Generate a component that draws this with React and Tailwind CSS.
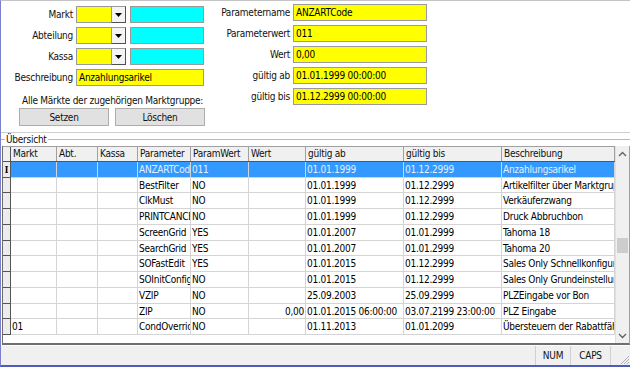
import React from "react";

const font = { fontFamily: "Tahoma, 'DejaVu Sans Condensed', 'Liberation Sans', sans-serif" };

const cols = [
  { key: "markt", label: "Markt", w: "w-[46px]" },
  { key: "abt", label: "Abt.", w: "w-[41px]" },
  { key: "kassa", label: "Kassa", w: "w-[40px]" },
  { key: "param", label: "Parameter", w: "w-[53px]" },
  { key: "pw", label: "ParamWert", w: "w-[58px]" },
  { key: "wert", label: "Wert", w: "w-[57px]", right: true },
  { key: "ab", label: "gültig ab", w: "w-[98px]" },
  { key: "bis", label: "gültig bis", w: "w-[98px]" },
  { key: "beschr", label: "Beschreibung", w: "w-[113px]" },
];

const rows = [
  { h: "h-[16px]", sel: true, param: "ANZARTCode", pw: "011", ab: "01.01.1999", bis: "01.12.2999", beschr: "Anzahlungsarikel" },
  { h: "h-[15px]", param: "BestFilter", pw: "NO", ab: "01.01.1999", bis: "01.12.2999", beschr: "Artikelfilter über Marktgruppe" },
  { h: "h-[16px]", param: "ClkMust", pw: "NO", ab: "01.01.1999", bis: "01.12.2999", beschr: "Verkäuferzwang" },
  { h: "h-[16px]", param: "PRINTCANCEL", pw: "NO", ab: "01.01.1999", bis: "01.12.2999", beschr: "Druck Abbruchbon" },
  { h: "h-[16px]", param: "ScreenGrid", pw: "YES", ab: "01.01.2007", bis: "01.01.2999", beschr: "Tahoma 18" },
  { h: "h-[15px]", param: "SearchGrid", pw: "YES", ab: "01.01.2007", bis: "01.01.2999", beschr: "Tahoma 20" },
  { h: "h-[16px]", param: "SOFastEdit", pw: "YES", ab: "01.01.2015", bis: "01.12.2999", beschr: "Sales Only Schnellkonfiguration" },
  { h: "h-[16px]", param: "SOInitConfig", pw: "NO", ab: "01.01.2015", bis: "01.12.2999", beschr: "Sales Only Grundeinstellung" },
  { h: "h-[16px]", param: "VZIP", pw: "NO", ab: "25.09.2003", bis: "25.09.2999", beschr: "PLZEingabe vor Bon" },
  { h: "h-[15px]", param: "ZIP", pw: "NO", wert: "0,00", ab: "01.01.2015 06:00:00", bis: "03.07.2199 23:00:00", beschr: "PLZ Eingabe" },
  { h: "h-[16px]", markt: "01", param: "CondOverride", pw: "NO", ab: "01.11.2013", bis: "01.01.2099", beschr: "Übersteuern der Rabattfähigkeit" },
];

function Field({ w, color = "bg-[#ffff00]", value = "" }) {
  return (
    <div className={`${w} ${color} h-[17px] border border-[#9a9a9a] pl-[2px] leading-[15px] whitespace-nowrap overflow-hidden text-black`}>
      {value}
    </div>
  );
}

function Combo() {
  return (
    <div className="flex h-[17px]">
      <div className="w-[35px] h-full bg-[#ffff00] border border-r-0 border-[#9a9a9a]" />
      <div className="w-[15px] h-full bg-[#f4f4f4] border border-[#9a9a9a] border-r-[#505050] border-b-[#505050] flex items-center justify-center">
        <svg width="7" height="4" viewBox="0 0 7 4">
          <path d="M0 0h7L3.5 4z" fill="#000" />
        </svg>
      </div>
    </div>
  );
}

function LeftRow({ label, children }) {
  return (
    <div className="flex items-center h-[17px]">
      <div className="w-[73px] text-right pr-[1px] text-[#111]">{label}</div>
      <div className="ml-[2px] flex items-center">{children}</div>
    </div>
  );
}

function RightRow({ label, value }) {
  return (
    <div className="flex items-center h-[17px]">
      <div className="w-[84px] text-right text-[#111]">{label}</div>
      <div className="ml-[3px]">
        <Field w="w-[134px]" value={value} />
      </div>
    </div>
  );
}

function Button({ children }) {
  return (
    <div className="w-[90px] h-[18px] bg-[#e1e1e1] border border-[#adadad] flex items-center justify-center text-[#111]">
      {children}
    </div>
  );
}

export default function App() {
  return (
    <div
      style={font}
      className="w-[630px] h-[367px] bg-white border-t border-t-[#c4c4c4] border-l border-l-[#7b7fd0] border-b-2 border-b-[#4e5bb8] flex flex-col text-[10px] tracking-[-0.25px] overflow-hidden"
    >
      {/* Eingabemaske */}
      <div className="h-[131px] flex shrink-0">
        <div className="w-[205px] pt-[5px] flex flex-col">
          <div className="flex flex-col gap-[4px]">
            <LeftRow label="Markt">
              <Combo />
              <div className="ml-[4px]"><Field w="w-[74px]" color="bg-[#00ffff]" /></div>
            </LeftRow>
            <LeftRow label="Abteilung">
              <Combo />
              <div className="ml-[4px]"><Field w="w-[74px]" color="bg-[#00ffff]" /></div>
            </LeftRow>
            <LeftRow label="Kassa">
              <Combo />
              <div className="ml-[4px]"><Field w="w-[74px]" color="bg-[#00ffff]" /></div>
            </LeftRow>
            <LeftRow label="Beschreibung">
              <Field w="w-[128px]" value="Anzahlungsarikel" />
            </LeftRow>
          </div>
          <div className="mt-[9px] pl-[21px] h-[12px] leading-[12px] whitespace-nowrap text-[#111]">
            Alle Märkte der zugehörigen Marktgruppe:
          </div>
          <div className="mt-[1px] pl-[18px] flex gap-[6px]">
            <Button>Setzen</Button>
            <Button>Löschen</Button>
          </div>
        </div>
        <div className="pt-[3px] flex flex-col gap-[4px]">
          <RightRow label="Parametername" value="ANZARTCode" />
          <RightRow label="Parameterwert" value="011" />
          <RightRow label="Wert" value="0,00" />
          <RightRow label="gültig ab" value="01.01.1999 00:00:00" />
          <RightRow label="gültig bis" value="01.12.2999 00:00:00" />
        </div>
      </div>

      <div className="h-px bg-[#d0d0d0] shrink-0" />

      {/* Gruppe Übersicht */}
      <div className="h-[13px] flex items-center shrink-0">
        <div className="w-[4px] h-px bg-[#b8b8b8]" />
        <div className="px-[1px] leading-[12px] text-[#111]">Übersicht</div>
        <div className="flex-1 h-px bg-[#b8b8b8]" />
      </div>

      {/* Grid */}
      <div className="ml-[1px] h-[199px] border-l border-r border-b-2 border-[#6e6e6e] border-r-[#a0a0a0] flex shrink-0">
        <div className="w-[612px] flex flex-col">
          <div className="flex h-[16px] bg-[#f0f0f0] border-t border-[#a0a0a0] border-b border-b-[#555]">
            <div className="w-[8px] border-r border-[#555]" />
            {cols.map((c) => (
              <div key={c.key} className={`${c.w} border-r border-[#a0a0a0] pl-[2px] leading-[14px] text-[#111] whitespace-nowrap overflow-hidden`}>
                {c.label}
              </div>
            ))}
          </div>
          {rows.map((r, i) => (
            <div key={i} className={`flex ${r.h}`}>
              <div className="w-[8px] bg-[#ececec] border-r border-b border-[#555] flex items-center justify-center">
                {r.sel && <span className="font-serif text-[10px] font-bold leading-none text-black">I</span>}
              </div>
              {cols.map((c) => (
                <div
                  key={c.key}
                  className={`${c.w} border-r border-b border-[#d4d4d4] px-[1px] flex items-center whitespace-nowrap overflow-hidden ${
                    c.right ? "justify-end" : ""
                  } ${r.sel ? "bg-[#3399ff] text-[#e4efff] border-[#7fb9f5]" : "text-black"}`}
                >
                  {r[c.key] || ""}
                </div>
              ))}
            </div>
          ))}
        </div>
        {/* Scrollbar */}
        <div className="flex-1 bg-[#f0f0f0] border-l border-[#e0e0e0] flex flex-col items-center">
          <svg width="9" height="6" viewBox="0 0 9 6" className="mt-[5px]">
            <path d="M1 5l3.5-3.5L8 5" stroke="#606060" strokeWidth="1.3" fill="none" />
          </svg>
          <div className="mt-[81px] w-[11px] h-[15px] bg-[#cdcdcd]" />
          <div className="flex-1" />
          <svg width="9" height="6" viewBox="0 0 9 6" className="mb-[4px]">
            <path d="M1 1l3.5 3.5L8 1" stroke="#606060" strokeWidth="1.3" fill="none" />
          </svg>
        </div>
      </div>

      {/* Statusleiste */}
      <div className="flex-1 bg-[#f0f0f0] border-t border-[#fdfdfd] flex justify-end text-[#111]">
        <div className="w-[35px] border-l border-[#d0d0d0] flex items-center justify-center">NUM</div>
        <div className="w-[40px] border-l border-[#d0d0d0] flex items-center justify-center">CAPS</div>
        <div className="w-[20px] border-l border-[#d0d0d0] flex items-end justify-end">
          <svg width="12" height="12" viewBox="0 0 12 12">
            <path d="M11 3L3 11M11 6L6 11M11 9L9 11" stroke="#b0b0b0" strokeWidth="1" />
          </svg>
        </div>
      </div>
    </div>
  );
}
